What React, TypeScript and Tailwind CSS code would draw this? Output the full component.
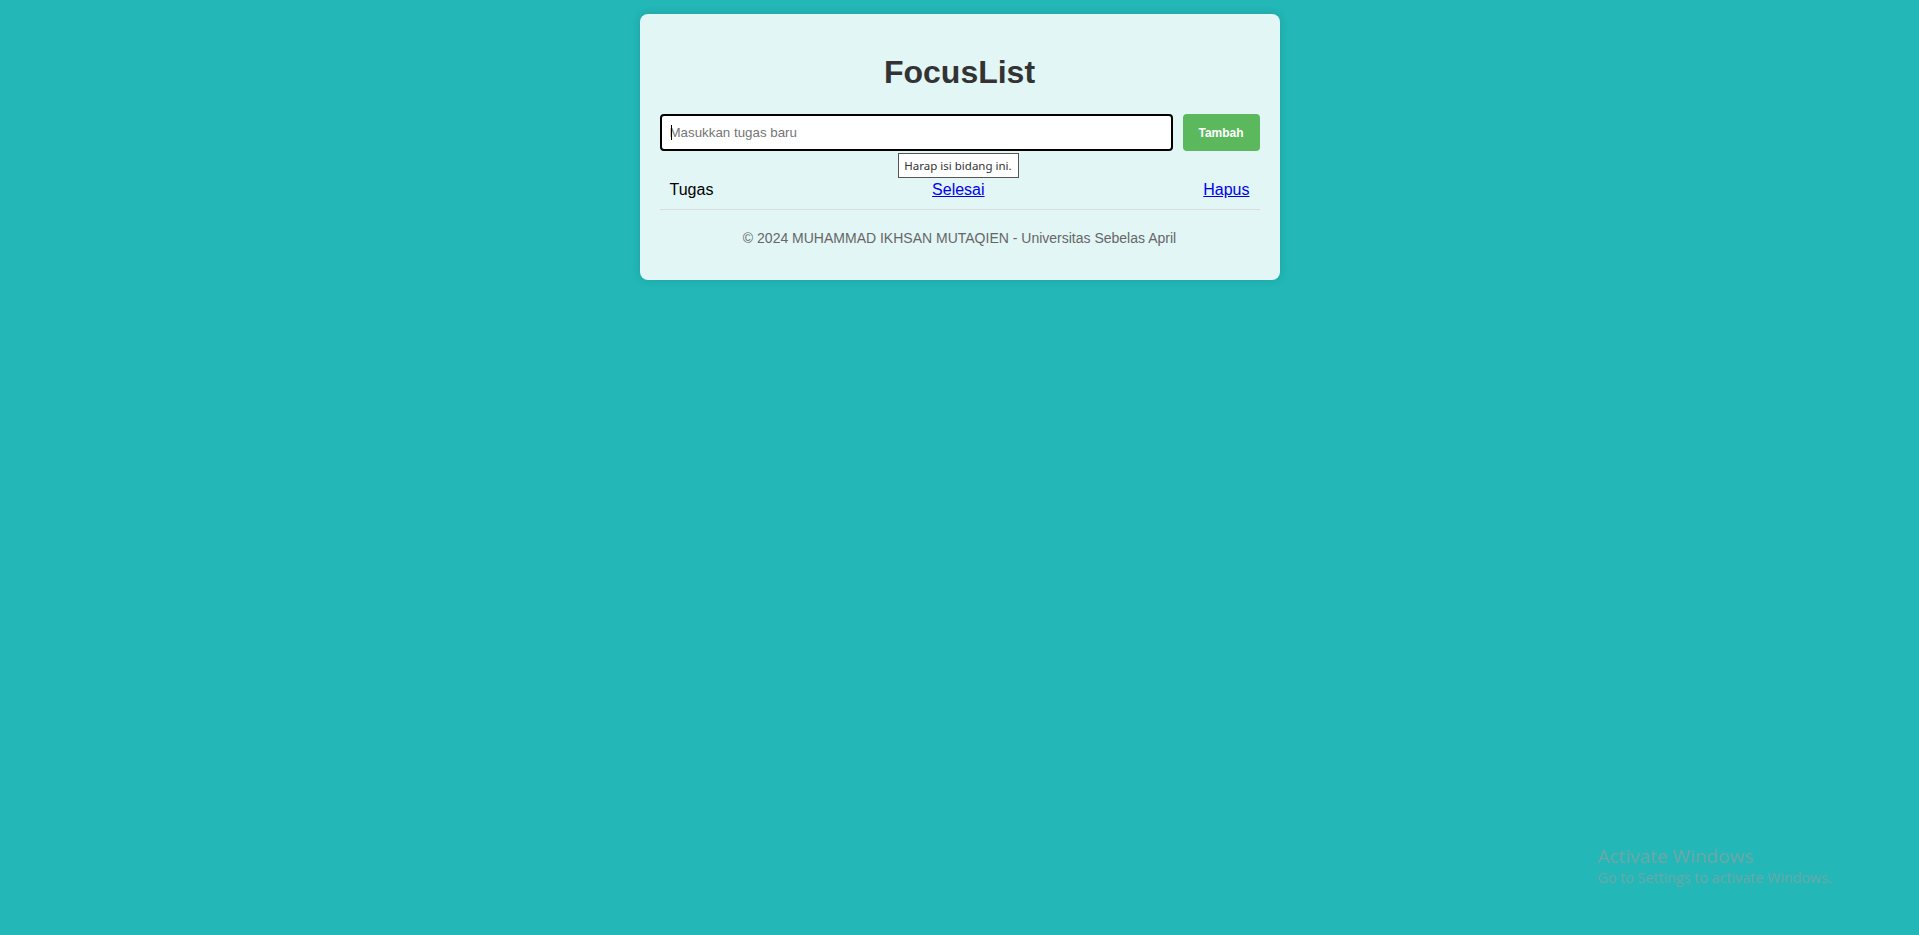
import React from "react";

export default function App() {
  return (
    <div
      className="min-h-screen w-full bg-[#23b7b7] pt-[14px]"
      style={{ fontFamily: '"Liberation Sans", Arial, sans-serif' }}
    >
      <div className="mx-auto w-[640px] rounded-lg bg-[#e2f6f6] px-5 pt-5 pb-5 shadow-[0_0_10px_rgba(0,0,0,0.12)]">
        <h1 className="mt-5 mb-[23px] text-center text-[32px] font-bold leading-[37px] text-[#333]">
          FocusList
        </h1>

        <div className="relative flex h-[37px] gap-[10px]">
          <div className="relative flex-1">
            <input
              type="text"
              placeholder="Masukkan tugas baru"
              className="h-full w-full rounded-[4px] border-2 border-black bg-white px-[8px] text-[13.33px] text-black placeholder:text-[#757575] outline-none"
              style={{ fontFamily: '"Liberation Sans", Arial, sans-serif' }}
            />
            <span className="pointer-events-none absolute left-[11px] top-[11px] h-[15px] w-px bg-black" />
          </div>
          <button className="w-[77px] rounded-[4px] bg-[#5cb85c] text-[12px] font-bold text-white">
            Tambah
          </button>

          <div
            className="absolute left-[238px] top-[39px] z-10 flex h-[25px] w-[121px] items-center justify-center border border-[#555] bg-white text-[11.5px] text-[#333]"
            style={{ fontFamily: '"Noto Sans", "Open Sans", sans-serif' }}
          >
            Harap isi bidang ini.
          </div>
        </div>

        <ul className="mt-5">
          <li className="flex justify-between border-b border-[#dcdcdc] px-[10px] py-[10px] text-[16px] leading-[18px] text-black">
            <span>Tugas</span>
            <a href="#" className="text-[#0000ee] underline">
              Selesai
            </a>
            <a href="#" className="text-[#0000ee] underline">
              Hapus
            </a>
          </li>
        </ul>

        <p className="mt-5 mb-[14px] text-center text-[14px] leading-[16px] text-[#666]">
          © 2024 MUHAMMAD IKHSAN MUTAQIEN - Universitas Sebelas April
        </p>
      </div>

      <div
        className="pointer-events-none fixed left-[1598px] top-[844px] text-[#70a6a6]"
        style={{ fontFamily: '"Open Sans", "Noto Sans", sans-serif' }}
      >
        <div className="text-[19px] leading-[25px]">Activate Windows</div>
        <div className="text-[14.3px] leading-[18px]">Go to Settings to activate Windows.</div>
      </div>
    </div>
  );
}
